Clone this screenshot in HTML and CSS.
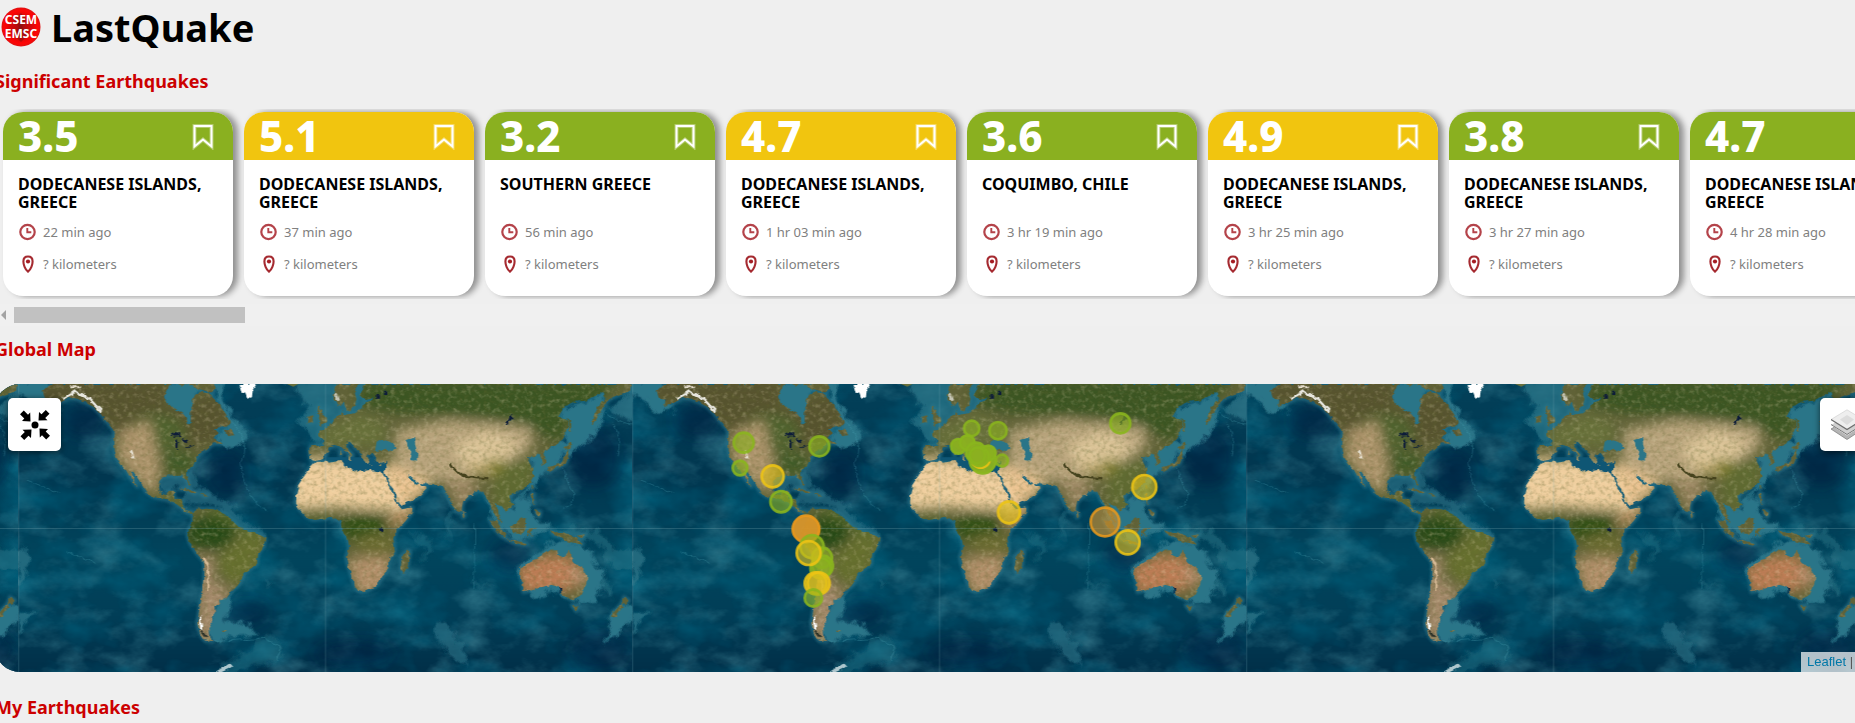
FILE: index.html
```html
<!DOCTYPE html>
<html lang="en">
<head>
<meta charset="utf-8">
<title>LastQuake</title>
<link rel="stylesheet" href="styles.css">
</head>
<body>
<svg class="defs" aria-hidden="true">
  <symbol id="bookmark" viewBox="0 0 24 28"><path d="M3.500 4H20.500V24.500L12 17.500L3.500 24.500Z" fill="none" stroke="#fff" stroke-opacity=".35" stroke-width="4"/><path d="M3.500 4H20.500V24.500L12 17.500L3.500 24.500Z" fill="none" stroke="#fff" stroke-width="2"/></symbol>
  <symbol id="clock" viewBox="0 0 18 18"><circle cx="9.500" cy="9" r="7.200" fill="none" stroke="#b4434a" stroke-width="2.200"/><path d="M9.300 5V9.300H13.300" fill="none" stroke="#b4434a" stroke-width="1.900"/></symbol>
  <symbol id="pin" viewBox="0 0 18 18"><path d="M10 1.500C6.800 1.500 5.400 3.800 5.400 6.400C5.400 9.500 7 14.500 10 16.600C13 14.500 14.600 9.500 14.600 6.400C14.600 3.800 13.200 1.500 10 1.500Z" fill="none" stroke="#a52a30" stroke-width="2.100"/><circle cx="10" cy="6.500" r="2.100" fill="#a51e24"/></symbol>
</svg>
<header class="top">
  <svg class="logo" viewBox="0 0 40 40" role="img" aria-label="CSEM EMSC">
    <defs><radialGradient id="lg"><stop offset="0" stop-color="#a30d0d"/><stop offset=".55" stop-color="#d80808"/><stop offset=".85" stop-color="#ff0505"/><stop offset="1" stop-color="#e01010"/></radialGradient></defs>
    <circle cx="20" cy="20" r="19.500" fill="url(#lg)"/>
    <path d="M20 6L25 12L21 20L28 27L20 35L13 28L18 20L12 12Z" fill="#7d1010" opacity=".5"/>
    <text x="20" y="17" class="logo-text">CSEM</text>
    <text x="20" y="31" class="logo-text">EMSC</text>
  </svg>
  <h1>LastQuake</h1>
</header>
<main>
  <section>
    <h2>Significant Earthquakes</h2>
    <div class="cards">
      <article class="card"><div class="mag green"><span>3.5</span><button aria-label="Bookmark"><svg><use href="#bookmark"/></svg></button></div><div class="info"><h3>DODECANESE ISLANDS, GREECE</h3><p><svg><use href="#clock"/></svg>22 min ago</p><p><svg><use href="#pin"/></svg>? kilometers</p></div></article>
      <article class="card"><div class="mag yellow"><span>5.1</span><button aria-label="Bookmark"><svg><use href="#bookmark"/></svg></button></div><div class="info"><h3>DODECANESE ISLANDS, GREECE</h3><p><svg><use href="#clock"/></svg>37 min ago</p><p><svg><use href="#pin"/></svg>? kilometers</p></div></article>
      <article class="card"><div class="mag green"><span>3.2</span><button aria-label="Bookmark"><svg><use href="#bookmark"/></svg></button></div><div class="info"><h3>SOUTHERN GREECE</h3><p><svg><use href="#clock"/></svg>56 min ago</p><p><svg><use href="#pin"/></svg>? kilometers</p></div></article>
      <article class="card"><div class="mag yellow"><span>4.7</span><button aria-label="Bookmark"><svg><use href="#bookmark"/></svg></button></div><div class="info"><h3>DODECANESE ISLANDS, GREECE</h3><p><svg><use href="#clock"/></svg>1 hr 03 min ago</p><p><svg><use href="#pin"/></svg>? kilometers</p></div></article>
      <article class="card"><div class="mag green"><span>3.6</span><button aria-label="Bookmark"><svg><use href="#bookmark"/></svg></button></div><div class="info"><h3>COQUIMBO, CHILE</h3><p><svg><use href="#clock"/></svg>3 hr 19 min ago</p><p><svg><use href="#pin"/></svg>? kilometers</p></div></article>
      <article class="card"><div class="mag yellow"><span>4.9</span><button aria-label="Bookmark"><svg><use href="#bookmark"/></svg></button></div><div class="info"><h3>DODECANESE ISLANDS, GREECE</h3><p><svg><use href="#clock"/></svg>3 hr 25 min ago</p><p><svg><use href="#pin"/></svg>? kilometers</p></div></article>
      <article class="card"><div class="mag green"><span>3.8</span><button aria-label="Bookmark"><svg><use href="#bookmark"/></svg></button></div><div class="info"><h3>DODECANESE ISLANDS, GREECE</h3><p><svg><use href="#clock"/></svg>3 hr 27 min ago</p><p><svg><use href="#pin"/></svg>? kilometers</p></div></article>
      <article class="card"><div class="mag green"><span>4.7</span><button aria-label="Bookmark"><svg><use href="#bookmark"/></svg></button></div><div class="info"><h3>DODECANESE ISLANDS, GREECE</h3><p><svg><use href="#clock"/></svg>4 hr 28 min ago</p><p><svg><use href="#pin"/></svg>? kilometers</p></div></article>
    </div>
    <div class="scrollbar"><span class="arrow"></span><span class="thumb"></span></div>
  </section>
  <section class="global">
    <h2>Global Map</h2>
    <div class="map">
      <svg class="world" viewBox="-15 42 5670 864" preserveAspectRatio="xMinYMin slice" role="img" aria-label="World map of earthquakes">
        <defs>
          <filter id="b4" x="-30%" y="-30%" width="160%" height="160%"><feGaussianBlur stdDeviation="5"/></filter>
          <filter id="b20" x="-60%" y="-60%" width="220%" height="220%"><feGaussianBlur stdDeviation="17"/></filter>
          <filter id="rough" x="-5%" y="-5%" width="110%" height="110%"><feTurbulence type="fractalNoise" baseFrequency=".06" numOctaves="3" seed="4" result="n"/><feDisplacementMap in="SourceGraphic" in2="n" scale="14" xChannelSelector="R" yChannelSelector="G"/></filter>
          <filter id="rough2" x="-30%" y="-30%" width="160%" height="160%"><feGaussianBlur stdDeviation="4" result="s"/><feTurbulence type="fractalNoise" baseFrequency=".03" numOctaves="4" seed="9" result="n"/><feDisplacementMap in="s" in2="n" scale="42" xChannelSelector="R" yChannelSelector="G"/></filter>
          <filter id="sea" x="0" y="0" width="100%" height="100%"><feTurbulence type="fractalNoise" baseFrequency=".008 .012" numOctaves="5" seed="21"/><feColorMatrix values="0 0 0 0 .1  0 0 0 0 .38  0 0 0 0 .46  2.400 0 0 0 -1.100"/></filter>
          <filter id="deep" x="0" y="0" width="100%" height="100%"><feTurbulence type="fractalNoise" baseFrequency=".006 .009" numOctaves="4" seed="5"/><feColorMatrix values="0 0 0 0 0  0 0 0 0 .15  0 0 0 0 .25  0 2.200 0 0 -.950"/></filter>
          <filter id="grain" x="0" y="0" width="100%" height="100%"><feTurbulence type="fractalNoise" baseFrequency=".08" numOctaves="4" seed="8"/><feColorMatrix values="0 0 0 0 .12  0 0 0 0 .13  0 0 0 0 .03  2.200 0 0 0 -.950"/></filter>
          <filter id="light" x="0" y="0" width="100%" height="100%"><feTurbulence type="fractalNoise" baseFrequency=".07" numOctaves="4" seed="2"/><feColorMatrix values="0 0 0 0 .85  0 0 0 0 .75  0 0 0 0 .5  0 2 0 0 -1"/></filter>
          <linearGradient id="ocean" x1="0" y1="0" x2="0" y2="1"><stop offset="0" stop-color="#03415a"/><stop offset=".3" stop-color="#01364f"/><stop offset=".6" stop-color="#01455d"/><stop offset=".8" stop-color="#013e57"/><stop offset="1" stop-color="#012f48"/></linearGradient>
          <g id="america">
            <path d="M150 42L128 62L133 80L155 92L150 108L180 98L200 85L225 85L250 95L280 110L300 130L320 155L340 180L345 190L340 220L342 245L350 265L362 285L378 300L392 325L412 350L405 330L392 305L400 305L420 335L438 365L460 380L490 388L520 395L540 410L555 425L575 433L578 425L560 425L548 410L547 392L528 388L520 378L525 362L505 362L500 372L485 372L476 350L478 330L490 318L515 316L530 320L545 312L555 325L565 347L569 340L558 315L560 300L580 285L590 265L600 250L620 240L640 220L665 222L650 208L640 205L655 185L640 178L660 170L690 165L688 150L670 125L660 105L640 85L625 70L600 65L585 75L578 90L580 110L572 125L572 155L565 165L560 145L548 130L525 118L500 100L492 80L500 60L515 42Z"/>
            <path d="M560 42L600 58L640 70L647 55L640 42ZM675 180L690 176L706 195L685 199ZM538 358L555 353L590 368L585 372L558 360ZM600 372L628 375L615 381ZM535 42L545 50L555 42Z"/>
            <path d="M578 430L600 415L640 418L665 425L680 435L700 455L720 475L745 485L775 492L797 505L790 530L775 550L770 585L745 600L728 615L720 640L700 660L690 670L680 685L658 692L660 705L643 705L645 728L635 740L640 752L625 775L628 800L640 813L615 812L600 790L592 760L598 720L605 680L612 640L614 600L612 575L590 550L570 520L562 495L570 470L578 455ZM665 782L682 782L672 790Z"/>
          </g>
          <g id="oldworld">
            <path d="M-20 275L20 275L65 270L72 285L95 298L115 305L150 300L185 305L195 325L215 365L235 405L245 418L278 412L275 430L255 455L230 480L220 505L225 545L205 575L200 600L185 625L165 650L140 662L115 663L105 650L95 620L82 580L78 560L88 530L82 500L65 480L62 455L45 445L30 440L10 447L-20 450L-40 440L-60 420L-72 400L-70 370L-65 345L-45 315L-30 295Z"/>
            <path d="M245 560L265 540L270 550L262 590L250 612L242 600Z"/>
            <path d="M-32 235L-28 268L-5 272L15 265L22 245L30 232L55 225L70 240L85 250L93 264L100 255L85 238L75 220L90 215L105 235L120 245L130 265L140 280L148 270L140 255L155 248L165 260L165 274L185 278L198 275L200 290L192 300L195 312L215 350L235 395L242 405L270 395L300 378L320 358L318 350L302 345L300 336L290 345L268 325L262 313L275 320L290 335L305 340L340 342L365 348L375 365L388 385L400 410L415 430L425 420L430 395L450 375L475 360L490 365L500 390L515 405L520 425L530 445L545 462L540 440L528 415L525 400L545 405L560 425L578 405L568 380L580 370L600 362L625 345L640 320L640 295L630 275L625 262L640 262L655 250L663 265L667 285L680 280L675 260L670 250L685 235L710 225L730 200L742 175L742 150L715 140L730 115L760 95L800 92L830 75L850 65L855 85L835 110L820 140L815 165L828 150L850 110L865 90L880 80L925 65L937 42L130 42L122 75L135 90L165 85L150 93L130 100L125 115L105 130L70 135L65 120L60 135L40 152L20 172L8 180L-5 185L-5 195L10 208L12 228L-25 227Z"/>
            <path d="M50 42L40 85L55 107L72 95L80 122L90 125L105 105L110 90L105 70L118 42ZM-5 105L8 130L22 150L18 162L-5 168L0 150L-8 130ZM-35 140L-20 136L-18 158L-36 162ZM62 240L66 250L60 256ZM82 262L96 262L90 270ZM145 285L160 286L150 289ZM176 286L186 283L182 289Z"/>
            <path d="M425 422L435 435L430 443ZM508 448L530 455L555 490L558 505L540 495L522 475ZM560 507L590 512L620 519L618 524L585 519ZM572 470L600 448L620 442L618 475L608 492L580 490ZM628 472L650 470L632 480L640 502L630 488L626 500L622 485ZM690 480L710 488L740 490L765 500L790 525L760 518L735 512L720 500L700 495ZM770 497L798 492L785 505ZM632 370L642 372L638 395L645 402L635 400ZM646 420L662 425L658 442L650 435ZM634 348L640 345L637 357ZM680 303L685 290L700 287L725 278L738 252L745 238L748 250L740 275L725 287L705 294L690 302ZM733 234L750 216L757 225L742 240ZM743 145L750 150L752 190L745 185ZM568 372L580 370L574 380Z"/>
            <path d="M598 592L625 580L650 570L665 552L690 538L712 538L715 555L735 565L747 535L755 560L765 580L785 590L802 615L800 640L785 675L760 688L735 680L720 660L715 650L695 645L670 650L640 660L610 667L608 640L600 615ZM756 706L775 708L768 722ZM912 680L928 690L915 705L905 700ZM905 700L908 712L885 740L870 745L880 728Z"/>
          </g>
          <mask id="land" maskUnits="userSpaceOnUse" x="55" y="42" width="1842" height="864"><g fill="#fff" filter="url(#rough)"><use href="#america"/><use href="#oldworld" x="960"/></g></mask>
          <clipPath id="tile"><rect x="55" y="42" width="1842" height="864"/></clipPath>
          <g id="planet" clip-path="url(#tile)">
            <rect x="55" y="42" width="1842" height="864" fill="url(#ocean)"/>
            <rect x="55" y="42" width="1842" height="864" filter="url(#sea)" opacity=".42"/>
            <rect x="55" y="42" width="1842" height="864" filter="url(#deep)" opacity=".6"/>
            <g fill="#001f3c" opacity=".5" filter="url(#b20)"><ellipse cx="250" cy="150" rx="70" ry="55"/><ellipse cx="680" cy="310" rx="60" ry="70"/><ellipse cx="740" cy="730" rx="65" ry="38"/><ellipse cx="1780" cy="260" rx="75" ry="90"/><ellipse cx="1530" cy="560" rx="60" ry="50"/><ellipse cx="1060" cy="850" rx="120" ry="40"/><ellipse cx="1800" cy="840" rx="90" ry="60"/></g>
            <g fill="none" stroke="#2a7288" stroke-width="10" stroke-linejoin="round" filter="url(#b4)" opacity=".8"><use href="#america"/><use href="#oldworld" x="960"/></g>
            <g fill="#2b7588" filter="url(#rough2)">
              <path d="M20 30H145L150 100L190 120L130 130L80 78L20 70ZM490 30H600L580 170L550 150L490 110ZM635 30H680L665 80L700 150L750 190L735 220L700 235L640 200L690 170L650 100Z"/>
              <path d="M850 30H1100V180L1050 155L965 190L975 230L930 200L895 160L930 110L880 50Z" opacity=".7"/>
              <path d="M465 315L570 310L580 300L590 350L640 372L690 400L720 450L800 490L790 510L700 470L650 405L560 400L540 355L500 370Z" opacity=".6"/>
              <path d="M650 690L700 670L670 750L740 765L775 790L700 800L640 815L620 770Z"/>
              <path d="M640 920L690 870L740 850L800 790L850 830L835 870L740 890L700 920Z" opacity=".35"/>
              <path d="M1675 120L1790 85L1825 60L1800 180L1720 240L1640 300L1600 350L1570 380L1590 390L1590 430L1650 470L1560 510L1500 480L1470 430L1465 390L1480 360L1530 420L1590 340L1590 250L1700 210Z"/>
              <path d="M1590 560L1660 520L1750 520L1810 610L1790 690L1740 700L1690 660L1600 680L1550 600Z"/>
              <path d="M1835 715L1950 710L1895 745L1860 790L1820 815L1830 750Z"/>
              <path d="M1770 540L1800 590L1840 670L1830 690L1790 630L1760 580ZM1640 470L1790 480L1850 540L1925 550L1900 600L1840 590L1790 520Z" opacity=".5"/>
              <path d="M1310 745L1340 750L1355 790L1390 835L1410 890L1370 880L1335 830L1310 810Z" opacity=".6"/>
              <path d="M1885 42H1990V160L1900 155L1830 120L1880 70ZM55 530L90 550L70 640L55 650ZM55 725L110 720L55 790Z" opacity=".75"/>
              <path d="M1345 350L1365 420L1340 520L1335 480L1350 410ZM1430 460L1422 640L1500 650L1420 655ZM1230 490L1290 500L1295 550L1260 580L1275 530ZM790 625L825 630L810 650Z" opacity=".4"/>
            </g>
            <path d="M930 262H1170V310H1060L1020 275ZM1125 210L1190 205V245L1120 243Z" fill="#0f5674"/>
            <g fill="none" stroke="#4fa5b5" stroke-width="3" opacity=".3" filter="url(#rough)"><path d="M80 330L180 370M200 545L290 580M1820 130Q1870 175 1960 160M1840 160Q1870 210 1850 260M1690 290Q1705 360 1725 370Q1725 400 1690 415M640 815L790 805L845 830L830 870M1425 460L1422 655M690 150Q760 220 720 280Q740 400 800 420"/></g>
            <g mask="url(#land)">
              <rect x="55" y="42" width="1842" height="864" fill="#606238"/>
              <g filter="url(#b20)">
                <path d="M110 30H500V120L660 60L700 200L500 240L360 200L260 100H110Z" fill="#56532f"/>
                <ellipse cx="470" cy="190" rx="90" ry="60" fill="#50622f"/>
                <ellipse cx="535" cy="280" rx="50" ry="35" fill="#3f5a26"/>
                <path d="M360 185L450 150L480 290L470 370L430 350L350 260Z" fill="#ad946c"/>
                <path d="M460 370L560 400L580 435L480 400Z" fill="#5b6b2c"/>
                <ellipse cx="630" cy="490" rx="75" ry="50" fill="#284a18"/>
                <path d="M590 415H680L800 500L770 540L700 460Z" fill="#546b2b"/>
                <path d="M720 500L800 490L770 600L700 650L640 580Z" fill="#66702f"/>
                <path d="M600 555L640 560L640 640L690 650L640 830L590 800Z" fill="#a4896a"/>
                <path d="M860 260L1020 265L1160 290L1215 400L1250 412L1190 422L990 412L870 418Z" fill="#f0cf9f"/>
                <path d="M1160 285L1210 275L1290 335L1280 365L1200 410Z" fill="#edc593"/>
                <ellipse cx="1090" cy="470" rx="75" ry="45" fill="#335019"/>
                <path d="M880 435L1000 425V452H880Z" fill="#405c1d"/>
                <ellipse cx="1130" cy="525" rx="65" ry="34" fill="#6c6c33"/>
                <path d="M1040 565L1180 560L1150 670H1070Z" fill="#b3906b"/>
                <path d="M1190 420L1250 415L1210 470L1160 460Z" fill="#b78f62"/>
                <path d="M1080 30H1860L1780 110L1700 150L1690 220L1600 180L1500 150L1400 140L1200 130L1080 110Z" fill="#3a5423"/>
                <path d="M950 190L1080 130L1160 160L1150 230L960 225Z" fill="#68713b"/>
                <path d="M1190 180L1350 150L1590 170L1600 230L1540 270L1460 260L1400 340L1280 330L1180 290Z" fill="#b9a47d"/>
                <path d="M1360 230L1460 180L1560 220L1510 290L1400 300Z" fill="#dcc498"/>
                <path d="M1400 280L1500 290L1490 320L1420 310Z" fill="#c1aa6d"/>
                <ellipse cx="1490" cy="290" rx="34" ry="22" fill="#7e7c21"/>
                <path d="M1320 320L1440 340L1400 440L1350 370Z" fill="#998461"/>
                <path d="M1520 280L1610 260L1590 360L1540 430L1480 400V320Z" fill="#5f6b32"/>
                <path d="M1550 590L1680 540L1750 600L1720 660L1570 670Z" fill="#bd7d54"/>
                <path d="M1690 600L1780 600L1750 650Z" fill="#b99372"/>
                <path d="M1670 530H1720V560H1650ZM1740 540L1780 610L1790 670L1720 690L1770 640Z" fill="#6d6d3b"/>
              </g>
              <rect x="55" y="42" width="1842" height="864" filter="url(#grain)" opacity=".38"/>
              <rect x="55" y="42" width="1842" height="864" filter="url(#light)" opacity=".35"/>
              <g fill="none" filter="url(#rough)"><path d="M1350 280Q1370 315 1410 322L1465 328" stroke="#44421f" stroke-width="7"/><path d="M190 85L225 65L270 88L305 125M300 140L330 175" stroke="#e8e7df" stroke-width="7"/><path d="M210 52H240M395 240L400 265" stroke="#e4dccb" stroke-width="6"/><path d="M610 560L626 590L622 660" stroke="#d5b994" stroke-width="6"/><path d="M600 740L604 780" stroke="#fff" stroke-width="6"/><path d="M620 800L605 780" stroke="#2d3329" stroke-width="5"/><path d="M1008 70L1016 92" stroke="#c5c5b5" stroke-width="9"/></g>
            </g>
            <g fill="#2b7588" filter="url(#rough)"><path d="M1220 210L1242 203L1246 225L1252 250L1250 272L1228 270L1234 245L1222 228ZM1130 215L1142 208L1160 212L1178 218L1190 235L1175 243L1150 238L1125 243Z"/></g>
            <g fill="#0b1d38" filter="url(#rough)"><path d="M508 195L530 187L542 198L525 200ZM526 210L534 208L532 237L527 235ZM545 203L560 210L562 220L550 215ZM552 235L572 228L585 224L575 232ZM1515 162L1528 150L1535 132L1538 145L1522 165ZM1137 472H1150V485H1138ZM1130 72H1140V86H1130ZM1152 62H1162V72H1152ZM1676 655L1684 655L1682 672Z"/></g>
            <path d="M718 42L724 65L734 66L742 87L756 78L758 60L770 42Z" fill="#fff" filter="url(#rough)"/>
            <path d="M860 42H895L880 50Z" fill="#69703c"/>
            <path d="M645 906L690 880L700 890L665 906Z" fill="#d7e5e8" opacity=".8" filter="url(#rough)"/>
            <path d="M55 475.500H1897M55.500 42V906M976.500 42V906" stroke="#89aeb7" stroke-opacity=".25" stroke-width="3" fill="none"/>
          </g>
        </defs>
        <use href="#planet" x="-1842"/><use href="#planet"/><use href="#planet" x="1842"/><use href="#planet" x="3684"/><use href="#planet" x="5526"/>
        <g class="markers" transform="translate(1890 0)">
          <circle class="g" cx="341" cy="218" r="30"/><circle class="g" cx="330" cy="294" r="22"/><circle class="g" cx="568" cy="229" r="30"/><circle class="y" cx="428" cy="319" r="33"/><circle class="g" cx="453" cy="395" r="32"/>
          <circle class="o full" cx="528" cy="477" r="40"/><circle class="g" cx="546" cy="530" r="35"/><circle class="g" cx="576" cy="563" r="30"/><circle class="g" cx="578" cy="588" r="31"/><circle class="g" cx="572" cy="595" r="31"/><circle class="y" cx="536" cy="549" r="36"/><circle class="y" cx="557" cy="640" r="33"/><circle class="y" cx="566" cy="640" r="33"/><circle class="g" cx="550" cy="684" r="26"/>
        </g>
        <g class="markers" transform="translate(2760 0)">
          <circle class="g" cx="155" cy="175" r="23"/><circle class="g" cx="234" cy="182" r="26"/><circle class="g" cx="601" cy="160" r="30"/><circle class="g" cx="246" cy="272" r="18"/>
          <circle class="g full" cx="115" cy="229" r="22"/><circle class="g full" cx="142" cy="218" r="22"/><circle class="g full" cx="168" cy="248" r="30"/><circle class="g full" cx="188" cy="271" r="39"/><circle class="y" cx="182" cy="265" r="28"/><circle class="g full" cx="205" cy="249" r="22"/><circle class="g full" cx="178" cy="260" r="28"/><circle class="g" cx="172" cy="256" r="23"/>
          <circle class="y" cx="673" cy="351" r="36"/><circle class="y" cx="267" cy="427" r="33"/><circle class="o" cx="555" cy="456" r="43"/><circle class="y" cx="623" cy="517" r="36"/>
        </g>
      </svg>
      <button class="control reset" aria-label="Reset view"><svg viewBox="0 0 32 32"><circle cx="16" cy="16" r="3.500"/><path id="arr" d="M11.500 12.500L11.200 3.500L9 5.800L4.800 1.500L1 5.200L5.300 9.500L3 12Z"/><use href="#arr" transform="rotate(90 16 16)"/><use href="#arr" transform="rotate(180 16 16)"/><use href="#arr" transform="rotate(270 16 16)"/></svg></button>
      <button class="control layers" aria-label="Layers"><svg viewBox="0 0 32 32"><path d="M0 20L16 11L32 20L16 30.500Z" fill="#b5b5b5" stroke="#777" stroke-width=".7"/><path d="M0 15.500L16 6L32 15.500L16 26Z" fill="#d0d0d0" stroke="#fff"/><path d="M0 15.500L16 25.500L32 15.500" fill="none" stroke="#777"/><path d="M0 10.500L16 .8L32 10.500L16 20.500Z" fill="#eee" stroke="#ccc" stroke-width=".6"/><path d="M0 10.500L16 20.500L32 10.500" fill="none" stroke="#6e6e6e" stroke-width="1.200"/><path d="M9 10.500L16 6L23 10.500L16 16Z" fill="#dcdcdc"/></svg></button>
      <div class="attribution"><a href="#">Leaflet</a> |</div>
    </div>
  </section>
  <section class="mine">
    <h2>My Earthquakes</h2>
  </section>
</main>
</body>
</html>
```
FILE: styles.css
```css
* { box-sizing: border-box; }
body {
  margin: 0;
  overflow: hidden;
  background: #efefef;
  font-family: "Noto Sans", "DejaVu Sans Condensed", sans-serif;
  color: #000;
}
h1, h2, h3, p { margin: 0; }
button { border: 0; padding: 0; background: none; cursor: pointer; }
.defs { position: absolute; width: 0; height: 0; }

.top { display: flex; align-items: center; gap: 10px; height: 55px; padding: 0 0 2px 1px; }
.logo { width: 40px; height: 40px; }
.logo-text { font-size: 12px; font-weight: 700; fill: #fff; text-anchor: middle; }
.top h1 { font-size: 38px; line-height: 48px; }

main { margin: 0 -30px 0 -5px; }
h2 { height: 54px; padding-top: 14px; font-size: 18px; line-height: 24px; color: #c00; }
.global h2 { height: 58px; padding-top: 11px; }
.mine h2 { padding-top: 23px; }

.cards { display: flex; gap: 11px; padding: 3px 8px; overflow: hidden; }
.card {
  flex: 0 0 230px;
  height: 184px;
  border-radius: 20px;
  background: #fff;
  box-shadow: 5px 0 6px rgba(0, 0, 0, 0.4);
}
.mag {
  display: flex;
  align-items: center;
  justify-content: space-between;
  height: 48px;
  padding: 0 18px 0 15px;
  border-radius: 20px 20px 0 0;
  color: #fff;
  font-size: 42px;
  font-weight: 800;
  line-height: 48px;
}
.green { background: #8ab020; }
.yellow { background: #f1c50f; }
.mag svg { display: block; width: 24px; height: 28px; }
.info { padding: 15px; }
.info h3 { height: 36px; margin-bottom: 13px; font-size: 16px; line-height: 18px; }
.info p { display: flex; align-items: center; gap: 7px; height: 32px; margin-top: -8px; margin-bottom: 8px; font-size: 13px; color: #808080; }
.info p svg { flex: none; width: 18px; height: 18px; }

.scrollbar { display: flex; align-items: center; height: 22px; margin-top: 5px; background: #f0f0f0; }
.arrow { margin: 0 8px 0 6px; border: solid transparent; border-width: 5px 5px 5px 0; border-right-color: #a3a3a3; }
.thumb { width: 231px; height: 16px; background: #c1c1c1; }

.map { position: relative; height: 288px; border-radius: 25px; overflow: hidden; background: #033a55; }
.world { display: block; width: 100%; height: 100%; }
.markers circle { stroke-width: 8px; stroke-opacity: 0.88; fill-opacity: 0.62; }
.markers .g { fill: #8ab020; stroke: #8ab51e; }
.markers .y { fill: #e0c01c; stroke: #edc414; }
.markers .o { fill: #d8952a; stroke: #e8981c; }
.markers .full { fill-opacity: 0.96; stroke-opacity: 0.95; }
.control {
  position: absolute;
  top: 14px;
  display: flex;
  align-items: center;
  justify-content: center;
  width: 53px;
  height: 53px;
  border-radius: 5px;
  background: #fff;
  box-shadow: 0 1px 6px rgba(0, 0, 0, 0.6);
}
.control svg { width: 32px; height: 32px; }
.reset { left: 13px; }
.layers { right: 12px; }
.attribution {
  position: absolute;
  right: 0;
  bottom: 0;
  min-width: 84px;
  padding: 0 6px;
  background: rgba(255, 255, 255, 0.7);
  color: #555;
  font: 13px/20px "Liberation Sans", Arial, sans-serif;
}
.attribution a { color: #0078a8; text-decoration: none; }
```
